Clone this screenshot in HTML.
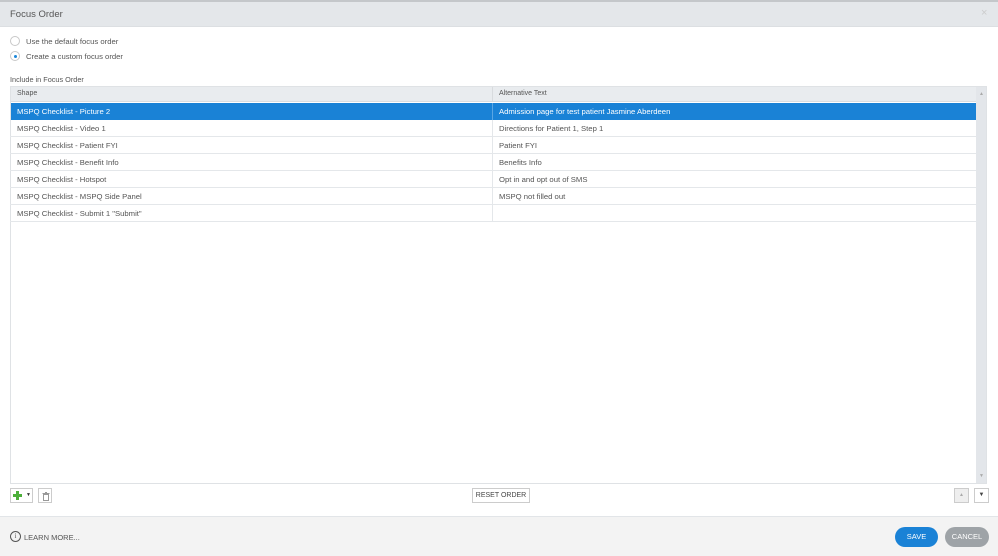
<!DOCTYPE html>
<html><head><style>
*{box-sizing:border-box;margin:0;padding:0}
body{width:998px;height:556px;background:#fff;font-family:"Liberation Sans",sans-serif;color:#555;position:relative;overflow:hidden;font-size:8px}
.a{position:absolute}
.top{left:0;top:0;width:998px;height:27px;background:#e4e7ea;border-top:2px solid #c4c7ca;border-bottom:1px solid #dcdfe2}
.radio{width:10px;height:10px;border:1px solid #c8c8c8;border-radius:50%;background:#fff}
.row{left:10px;width:966px;height:17px;border-bottom:1px solid #e4e7ea;font-size:7.7px;line-height:17px;color:#555}
.row span{position:absolute;top:0}
.c1{left:7px}.c2{left:489px}
.sep{position:absolute;left:482px;top:0;width:1px;height:17px;background:#e4e7ea}
.btn{border:1px solid #ccc;background:#fff}
</style></head><body>
<div class="a top"><div class="a" style="left:10px;top:7px;font-size:9.5px;color:#555">Focus Order</div><div class="a" style="left:981px;top:5px;font-size:11px;color:#ccc">×</div></div>
<div class="a radio" style="left:10px;top:36px"></div>
<div class="a" style="left:26px;top:37px;font-size:7.7px">Use the default focus order</div>
<div class="a radio" style="left:10px;top:51px"><div class="a" style="left:3px;top:3px;width:3px;height:3px;border-radius:50%;background:#1a86d9"></div></div>
<div class="a" style="left:26px;top:52px;font-size:7.7px">Create a custom focus order</div>
<div class="a" style="left:10px;top:75px;font-size:7.3px">Include in Focus Order</div>
<div class="a" style="left:10px;top:86px;width:977px;height:398px;border:1px solid #dfe2e5;background:#fff"></div>
<div class="a" style="left:11px;top:87px;width:965px;height:15px;background:#e9ecef;border-bottom:1px solid #dadde0"></div>
<div class="a" style="left:17px;top:90px;font-size:7px">Shape</div>
<div class="a" style="left:499px;top:90px;font-size:7px">Alternative Text</div>
<div class="a" style="left:492px;top:87px;width:1px;height:15px;background:#d8dbde"></div>
<div class="a" style="left:976px;top:87px;width:10px;height:396px;background:#e3e6ea"><div class="a" style="left:3px;top:4px;font-size:5px;color:#aaa">▲</div><div class="a" style="left:3px;top:386px;font-size:5px;color:#aaa">▼</div></div>
<div class="a row" style="top:103px;background:#1a82d6;color:#fff;left:11px;width:965px;border-bottom:none"><span class="c1" style="left:6px">MSPQ Checklist - Picture 2</span><div class="sep" style="left:481px;background:#5aa6e4"></div><span style="left:488px">Admission page for test patient Jasmine Aberdeen</span></div>
<div class="a row" style="top:120px"><span class="c1">MSPQ Checklist - Video 1</span><div class="sep"></div><span class="c2">Directions for Patient 1, Step 1</span></div>
<div class="a row" style="top:137px"><span class="c1">MSPQ Checklist - Patient FYI</span><div class="sep"></div><span class="c2">Patient FYI</span></div>
<div class="a row" style="top:154px"><span class="c1">MSPQ Checklist - Benefit Info</span><div class="sep"></div><span class="c2">Benefits Info</span></div>
<div class="a row" style="top:171px"><span class="c1">MSPQ Checklist - Hotspot</span><div class="sep"></div><span class="c2">Opt in and opt out of SMS</span></div>
<div class="a row" style="top:188px"><span class="c1">MSPQ Checklist - MSPQ Side Panel</span><div class="sep"></div><span class="c2">MSPQ not filled out</span></div>
<div class="a row" style="top:205px"><span class="c1">MSPQ Checklist - Submit 1 "Submit"</span><div class="sep"></div></div>
<div class="a btn" style="left:10px;top:488px;width:23px;height:15px"><svg class="a" style="left:2px;top:2px" width="9" height="9"><rect x="3" y="0" width="3" height="9" fill="#4caf3a"/><rect x="0" y="3" width="9" height="3" fill="#4caf3a"/></svg><div class="a" style="left:15px;top:3px;font-size:5px;color:#333">▼</div></div>
<div class="a btn" style="left:38px;top:488px;width:14px;height:15px"><svg class="a" style="left:3px;top:3px" width="8" height="9" viewBox="0 0 8 9"><rect x="0.5" y="1" width="7" height="1" fill="#999"/><rect x="3" y="0" width="2" height="1" fill="#999"/><rect x="1.5" y="2.5" width="5" height="6" fill="none" stroke="#999"/></svg></div>
<div class="a btn" style="left:472px;top:488px;width:58px;height:15px;font-size:7px;color:#444;text-align:center;line-height:13px">RESET ORDER</div>
<div class="a btn" style="left:954px;top:488px;width:15px;height:15px;background:#eee;font-size:5px;color:#aaa;text-align:center;line-height:13px">▲</div>
<div class="a btn" style="left:974px;top:488px;width:15px;height:15px;font-size:6px;color:#444;text-align:center;line-height:13px">▼</div>
<div class="a" style="left:0;top:516px;width:998px;height:40px;background:#f3f3f3;border-top:1px solid #e2e5e8"></div>
<div class="a" style="left:10px;top:531px;width:11px;height:11px;border:1px solid #555;border-radius:50%;font-size:7px;text-align:center;line-height:9px;color:#555;font-family:'Liberation Serif',serif">i</div>
<div class="a" style="left:24px;top:533px;font-size:7.5px;color:#555">LEARN MORE...</div>
<div class="a" style="left:895px;top:527px;width:43px;height:20px;border-radius:10px;background:#1a82d6;color:#fff;font-size:7.5px;text-align:center;line-height:20px">SAVE</div>
<div class="a" style="left:945px;top:527px;width:44px;height:20px;border-radius:10px;background:#9ea3a7;color:#fff;font-size:7.5px;text-align:center;line-height:20px">CANCEL</div>
</body></html>
